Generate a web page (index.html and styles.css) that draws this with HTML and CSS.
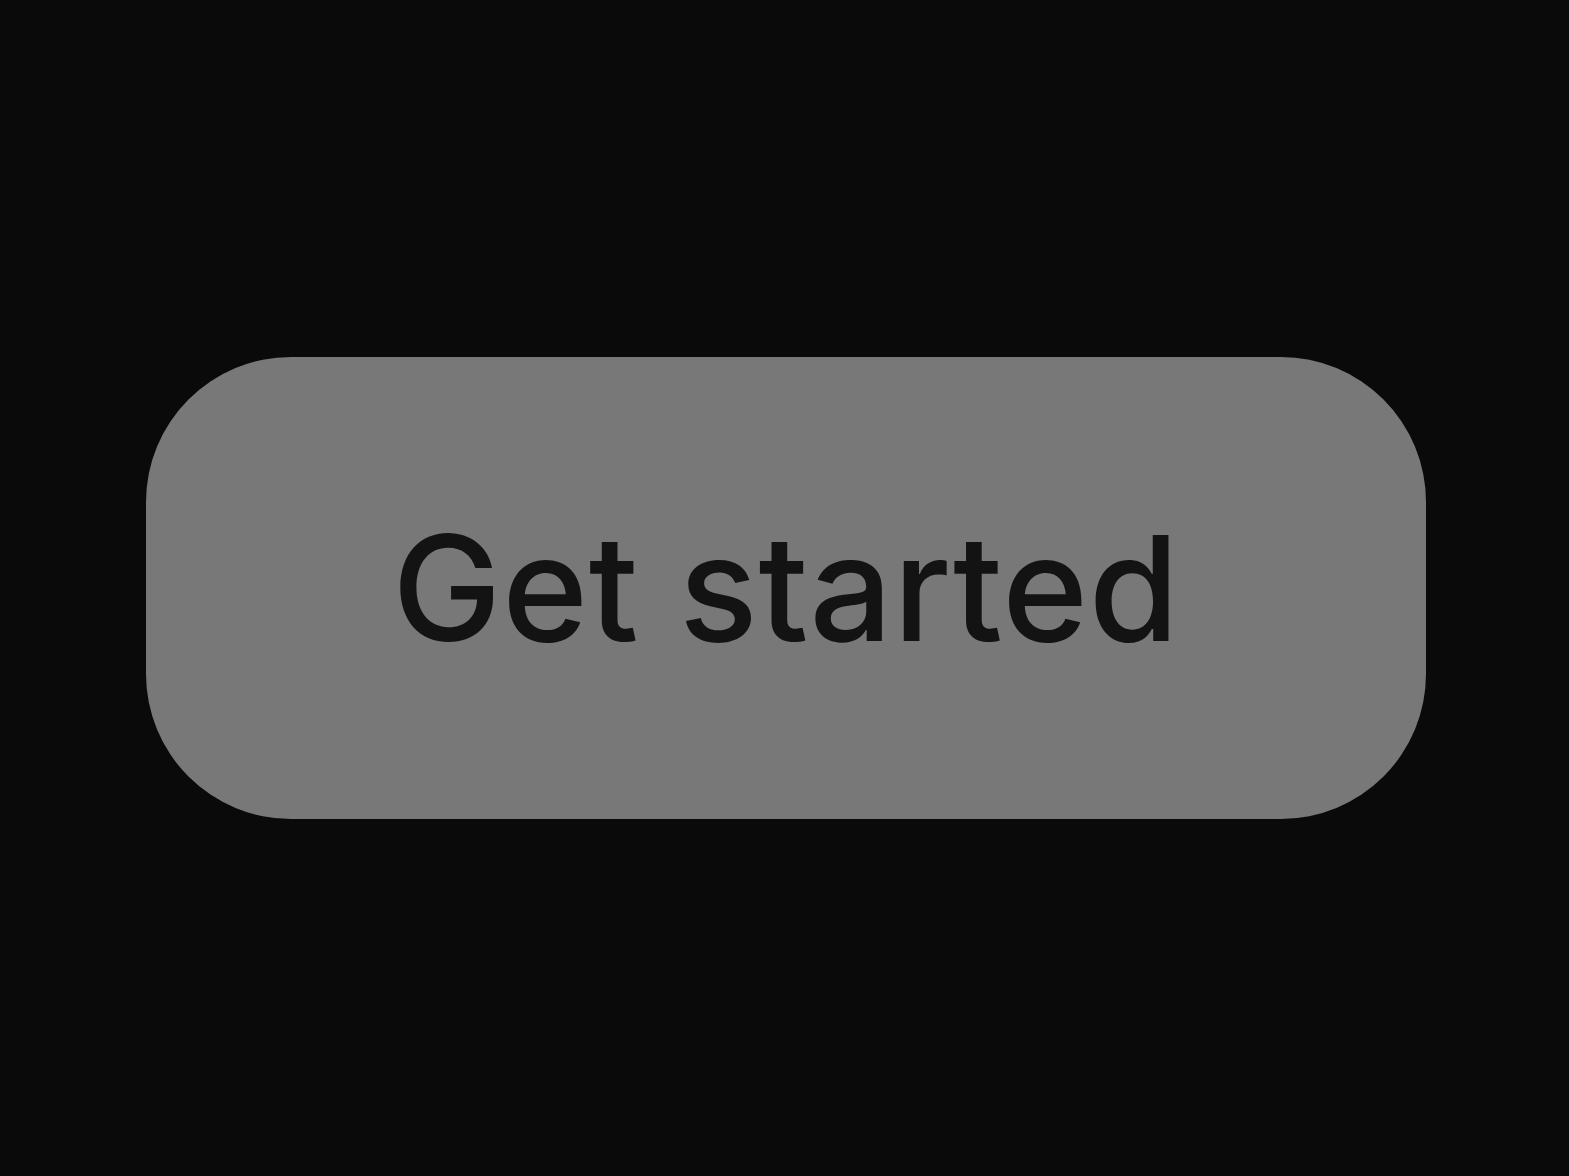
FILE: index.html
```html
<!DOCTYPE html>
<html lang="en">
<head>
<meta charset="utf-8">
<title>Get started</title>
<link rel="stylesheet" href="styles.css">
</head>
<body>
<main class="stage">
  <button class="cta">Get started</button>
</main>
</body>
</html>
```
FILE: styles.css
```css
html, body {
  margin: 0;
  padding: 0;
  height: 100%;
  background: #0a0a0a;
}
.stage {
  height: 100vh;
  display: flex;
  align-items: center;
  justify-content: center;
  padding-left: 2px;
  box-sizing: border-box;
}
.cta {
  width: 1280px;
  height: 462px;
  border: none;
  border-radius: 145px;
  background: #787878;
  color: #131313;
  font-family: Inter, "Noto Sans", sans-serif;
  font-weight: 500;
  font-size: 146px;
  letter-spacing: 0.8px;
  padding: 0 0 0 1px;
  display: flex;
  align-items: center;
  justify-content: center;
  cursor: pointer;
}
```
